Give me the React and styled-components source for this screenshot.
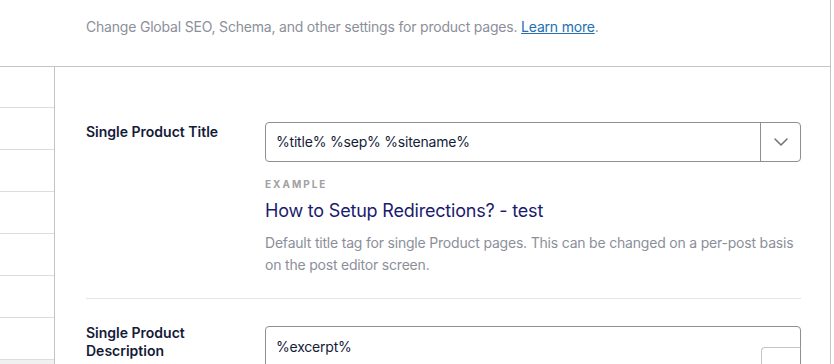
import React from 'react';
import styled, { createGlobalStyle } from 'styled-components';

const GlobalStyle = createGlobalStyle`
  html, body {
    margin: 0;
    padding: 0;
    background: #fff;
    overflow: hidden;
  }
  body {
    font-family: Inter, "Liberation Sans", Arial, sans-serif;
    color: #141b38;
  }
`;

const Card = styled.div`
  width: 830px;
  height: 364px;
  border-right: 1px solid #c3c4c7;
  display: flex;
  flex-direction: column;
`;

const Header = styled.header`
  flex-shrink: 0;
  height: 67px;
  box-sizing: border-box;
  border-bottom: 1px solid #c3c4c7;
  padding-left: 86px;
  display: flex;
  flex-direction: column;
  align-items: flex-start;
`;

const HeaderInner = styled.div`
  display: flex;
  flex-direction: column;
  align-items: center;
`;

/* the page title sits above the visible area */
const TitleClip = styled.div`
  height: 8px;
  overflow: hidden;
`;

const Title = styled.h1`
  margin: 0;
  font-size: 24px;
  line-height: 32px;
  font-weight: 700;
  color: #141b38;
  transform: translateY(-24px);
`;

const Subtitle = styled.p`
  margin: 8px 0 0;
  font-size: 14px;
  line-height: 22px;
  letter-spacing: -0.2px;
  color: #8c8f9a;

  a {
    color: #2271b1;
    text-decoration: underline;
  }
`;

const Body = styled.div`
  flex: 1;
  display: flex;
  min-height: 0;
  overflow: hidden;
`;

const Sidebar = styled.nav`
  width: 54px;
  flex-shrink: 0;
  border-right: 1px solid #c3c4c7;
  display: flex;
  flex-direction: column;
`;

const NavItem = styled.div`
  height: ${(p) => p.$h}px;
  flex-shrink: 0;
  border-bottom: 1px solid #dcdcde;
  background: ${(p) => (p.$active ? '#f0f0f1' : '#fff')};
`;

const Main = styled.main`
  flex: 1;
  padding: 55px 29px 0 31px;
  display: flex;
  flex-direction: column;
`;

const Row = styled.div`
  display: grid;
  grid-template-columns: 179px 1fr;
  padding-bottom: ${(p) => (p.$last ? 0 : 22)}px;
  margin-bottom: ${(p) => (p.$last ? 0 : 27)}px;
  border-bottom: ${(p) => (p.$last ? 'none' : '1px solid #e5e5e5')};
`;

const Label = styled.div`
  font-size: 14px;
  line-height: 18px;
  font-weight: 600;
  color: #141b38;
  padding-top: ${(p) => (p.$tight ? 0 : 1)}px;
  margin-top: ${(p) => (p.$tight ? -2 : 0)}px;
  padding-right: 40px;
`;

const Field = styled.div`
  display: flex;
  flex-direction: column;
`;

const InputBox = styled.div`
  position: relative;
  height: ${(p) => p.$h}px;
  box-sizing: border-box;
  border: 1px solid #8c8f94;
  border-radius: 4px;
  display: flex;
  align-items: ${(p) => (p.$top ? 'flex-start' : 'center')};
  background: #fff;
`;

const InputText = styled.div`
  flex: 1;
  padding: ${(p) => (p.$top ? '10px 10px 0' : '0 10px')};
  font-size: 14px;
  line-height: 20px;
  letter-spacing: -0.2px;
  color: #141b38;
`;

const Toggle = styled.div`
  width: 39px;
  align-self: stretch;
  border-left: 1px solid #8c8f94;
  display: flex;
  align-items: center;
  justify-content: center;
  color: #707070;
`;

const CornerButton = styled.div`
  position: absolute;
  right: -1px;
  top: 20px;
  width: 40px;
  height: 40px;
  box-sizing: border-box;
  border: 1px solid #c3c4c7;
  border-right-color: #8c8f94;
  border-radius: 4px 0 0 0;
  background: #fff;
`;

const ExampleLabel = styled.div`
  margin-top: 16px;
  font-size: 10px;
  line-height: 12px;
  font-weight: 700;
  letter-spacing: 2px;
  color: #a1a1a1;
`;

const ExampleLink = styled.div`
  margin-top: 9px;
  font-size: 18px;
  line-height: 24px;
  letter-spacing: -0.2px;
  color: #1a1b6e;
`;

const Help = styled.p`
  margin: 9px 0 0;
  font-size: 14px;
  line-height: 22px;
  letter-spacing: -0.2px;
  color: #8c8f9a;
`;

const Chevron = () => (
  <svg width="14" height="8" viewBox="0 0 14 8" fill="none">
    <path d="M1 1l6 6 6-6" stroke="currentColor" strokeWidth="1.5" strokeLinecap="round" strokeLinejoin="round" />
  </svg>
);

const navHeights = [40, 41, 41, 41, 41, 41, 41, 60];

export default function App() {
  return (
    <>
      <GlobalStyle />
      <Card>
        <Header>
          <HeaderInner>
            <TitleClip>
              <Title>Products</Title>
            </TitleClip>
            <Subtitle>
              Change Global SEO, Schema, and other settings for product pages. <a href="#">Learn more</a>.
            </Subtitle>
          </HeaderInner>
        </Header>
        <Body>
          <Sidebar>
            {navHeights.map((h, i) => (
              <NavItem key={i} $h={h} $active={i === navHeights.length - 1} />
            ))}
          </Sidebar>
          <Main>
            <Row>
              <Label>Single Product Title</Label>
              <Field>
                <InputBox $h={40}>
                  <InputText>%title% %sep% %sitename%</InputText>
                  <Toggle>
                    <Chevron />
                  </Toggle>
                </InputBox>
                <ExampleLabel>EXAMPLE</ExampleLabel>
                <ExampleLink>How to Setup Redirections? - test</ExampleLink>
                <Help>
                  Default title tag for single Product pages. This can be changed on a per-post basis on the post editor screen.
                </Help>
              </Field>
            </Row>
            <Row $last>
              <Label $tight>Single Product Description</Label>
              <Field>
                <InputBox $h={80} $top>
                  <InputText $top>%excerpt%</InputText>
                  <CornerButton />
                </InputBox>
              </Field>
            </Row>
          </Main>
        </Body>
      </Card>
    </>
  );
}
